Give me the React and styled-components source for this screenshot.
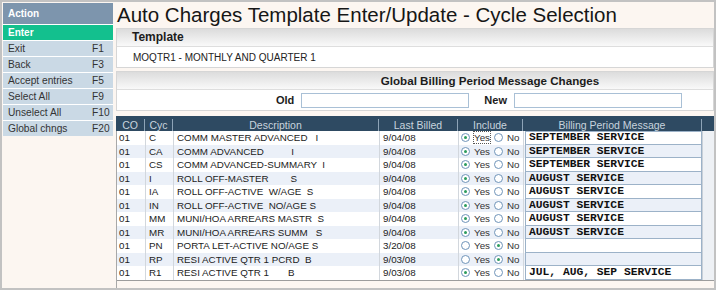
import styled, { createGlobalStyle } from "styled-components";

const GlobalStyle = createGlobalStyle`
  html, body { margin: 0; padding: 0; background: #fff; }
  body { font-family: "Liberation Sans", Arial, sans-serif; color: #222; }
`;

const Frame = styled.div`
  box-sizing: border-box;
  width: 716px;
  height: 290px;
  border: 2px solid #c2c2c2;
  background: #fcf6f1;
  display: flex;
  gap: 3px;
  padding: 1px 0 0 1px;
`;

const Sidebar = styled.div`
  width: 110px;
  display: flex;
  flex-direction: column;
`;

const SideHead = styled.div`
  height: 21px;
  line-height: 21px;
  background: #7d95ad;
  color: #fff;
  font-weight: bold;
  font-size: 10px;
  padding-left: 5px;
`;

const SideRow = styled.div`
  height: 15px;
  border-top: 1px solid #fff;
  display: grid;
  grid-template-columns: 1fr 21px;
  align-items: center;
  padding-left: 5px;
  font-size: ${(p) => (p.$active ? "10px" : "10.2px")};
  font-weight: ${(p) => (p.$active ? "bold" : "normal")};
  background: ${(p) => (p.$active ? "#13c08e" : "#cad9e5")};
  color: ${(p) => (p.$active ? "#fff" : "#333")};
`;

const Main = styled.div`
  flex: 1;
  display: flex;
  flex-direction: column;
`;

const Title = styled.div`
  height: 24px;
  margin-bottom: 1px;
  line-height: 24px;
  font-size: 20.5px;
  color: #161616;
  padding-left: 1px;
  white-space: nowrap;
`;

const Panel = styled.div`
  border: 1px solid #d6d6d6;
  background: #fff;
  margin-top: ${(p) => p.$gap || 0}px;
`;

const PanelHead = styled.div`
  height: 17px;
  line-height: 17px;
  background: linear-gradient(to bottom, #dcdcdc, #f9f9f9);
  border-bottom: 1px solid #dedede;
  font-weight: bold;
  color: #1c1c1c;
  font-size: ${(p) => p.$size}px;
  padding-left: ${(p) => p.$indent}px;
  text-align: ${(p) => p.$align || "left"};
`;

const PanelBody = styled.div`
  height: 20px;
  display: flex;
  align-items: center;
  font-size: 10px;
  padding-left: ${(p) => p.$indent}px;
  gap: ${(p) => p.$gapX || 0}px;
`;

const FieldLabel = styled.span`
  font-weight: bold;
  font-size: 11px;
  color: #1c1c1c;
  margin-left: ${(p) => p.$ml || 0}px;
`;

const TextBox = styled.div`
  box-sizing: border-box;
  width: 168px;
  height: 15px;
  border: 1px solid #a9c0d6;
  background: #fff;
`;

const Table = styled.div`
  flex: 1;
  margin-top: 5px;
  display: flex;
  flex-direction: column;
  border-left: 1px solid #a8a8a8;
`;

const cols = "28px 28px 206px 79px 65px 179px 1fr";

const HeadRow = styled.div`
  height: 15px;
  display: grid;
  grid-template-columns: ${cols};
  background: #2e4a62;
  margin-left: -1px;
`;

const HeadCell = styled.div`
  margin: 3px 0;
  border-left: ${(p) => (p.$first ? "none" : "1px solid #8ea4b7")};
  display: flex;
  align-items: center;
  justify-content: center;
  font-size: 10.5px;
  color: #c8d4de;
  white-space: nowrap;
`;

const Row = styled.div`
  height: 13.5px;
  display: grid;
  grid-template-columns: ${cols};
  background: ${(p) => (p.$alt ? "#ebf0f8" : "#fff")};
`;

const Cell = styled.div`
  border-left: ${(p) => (p.$first ? "none" : "1px solid #d2d7dd")};
  padding-left: ${(p) => (p.$first ? 2 : 3)}px;
  font-size: 9.8px;
  line-height: 13.5px;
  white-space: pre;
  overflow: hidden;
  color: #222;
`;

const IncludeCell = styled.div`
  border-left: 1px solid #d2d7dd;
  display: flex;
  align-items: center;
  padding-left: 2px;
  font-size: 9.8px;
  color: #333;
`;

const Radio = styled.span`
  box-sizing: border-box;
  width: 9px;
  height: 9px;
  border-radius: 50%;
  border: 1px solid #6f94b9;
  background: #fff;
  display: inline-flex;
  align-items: center;
  justify-content: center;
  margin-right: 4px;
  margin-left: ${(p) => p.$ml || 0}px;
  &::after {
    content: "";
    width: 3px;
    height: 3px;
    border-radius: 50%;
    background: ${(p) => (p.$on ? "#2c9c5c" : "transparent")};
  }
`;

const RadioLabel = styled.span`
  line-height: 11px;
  outline: ${(p) => (p.$focus ? "1px dotted #555" : "none")};
`;

const MsgCell = styled.div`
  border-left: 1px solid #d2d7dd;
  padding-left: 1px;
  display: flex;
`;

const MsgBox = styled.div`
  box-sizing: border-box;
  flex: 1;
  border: 1px solid #9cb2c8;
  border-top: ${(p) => (p.$first ? "1px solid #9cb2c8" : "none")};
  padding-left: 3px;
  font-family: "Liberation Mono", "Courier New", monospace;
  font-weight: bold;
  font-size: 11.3px;
  line-height: ${(p) => (p.$first ? "11.5px" : "12.5px")};
  color: #111;
  white-space: pre;
`;

const EndCell = styled.div`
  border-left: 1px solid #c9d0d8;
  background: #eef1f5;
`;

const Filler = styled.div`
  flex: 1;
  border-top: 1px solid #9c9c9c;
`;

const actions = [
  ["Exit", "F1"],
  ["Back", "F3"],
  ["Accept entries", "F5"],
  ["Select All", "F9"],
  ["Unselect All", "F10"],
  ["Global chngs", "F20"],
];

const rows = [
  ["C", "COMM MASTER ADVANCED   I", "9/04/08", true, "SEPTEMBER SERVICE"],
  ["CA", "COMM ADVANCED          I", "9/04/08", true, "SEPTEMBER SERVICE"],
  ["CS", "COMM ADVANCED-SUMMARY  I", "9/04/08", true, "SEPTEMBER SERVICE"],
  ["I", "ROLL OFF-MASTER        S", "9/04/08", true, "AUGUST SERVICE"],
  ["IA", "ROLL OFF-ACTIVE  W/AGE  S", "9/04/08", true, "AUGUST SERVICE"],
  ["IN", "ROLL OFF-ACTIVE  NO/AGE S", "9/04/08", true, "AUGUST SERVICE"],
  ["MM", "MUNI/HOA ARREARS MASTR  S", "9/04/08", true, "AUGUST SERVICE"],
  ["MR", "MUNI/HOA ARREARS SUMM   S", "9/04/08", true, "AUGUST SERVICE"],
  ["PN", "PORTA LET-ACTIVE NO/AGE S", "3/20/08", false, ""],
  ["RP", "RESI ACTIVE QTR 1 PCRD  B", "9/03/08", false, ""],
  ["R1", "RESI ACTIVE QTR 1       B", "9/03/08", true, "JUL, AUG, SEP SERVICE"],
];

export default function App() {
  return (
    <>
      <GlobalStyle />
      <Frame>
        <Sidebar>
          <SideHead>Action</SideHead>
          <SideRow $active>Enter</SideRow>
          {actions.map(([label, key]) => (
            <SideRow key={key}>
              <span>{label}</span>
              <span>{key}</span>
            </SideRow>
          ))}
        </Sidebar>

        <Main>
          <Title>Auto Charges Template Enter/Update - Cycle Selection</Title>

          <Panel>
            <PanelHead $size={12} $indent={15}>Template</PanelHead>
            <PanelBody $indent={16}>MOQTR1 - MONTHLY AND QUARTER 1</PanelBody>
          </Panel>

          <Panel $gap={3}>
            <PanelHead $size={11.6} $indent={150} $align="center">
              Global Billing Period Message Changes
            </PanelHead>
            <PanelBody $indent={159} $gapX={7}>
              <FieldLabel>Old</FieldLabel>
              <TextBox />
              <FieldLabel $ml={8}>New</FieldLabel>
              <TextBox />
            </PanelBody>
          </Panel>

          <Table>
            <HeadRow>
              <HeadCell $first>CO</HeadCell>
              <HeadCell>Cyc</HeadCell>
              <HeadCell>Description</HeadCell>
              <HeadCell>Last Billed</HeadCell>
              <HeadCell>Include</HeadCell>
              <HeadCell>Billing Period Message</HeadCell>
              <HeadCell />
            </HeadRow>
            {rows.map(([cyc, desc, date, yes, msg], i) => (
              <Row key={cyc} $alt={i % 2 === 1}>
                <Cell $first>01</Cell>
                <Cell>{cyc}</Cell>
                <Cell>{desc}</Cell>
                <Cell>{date}</Cell>
                <IncludeCell>
                  <Radio $on={yes} />
                  <RadioLabel $focus={i === 0}>Yes</RadioLabel>
                  <Radio $on={!yes} $ml={4} />
                  <RadioLabel>No</RadioLabel>
                </IncludeCell>
                <MsgCell>
                  <MsgBox $first={i === 0}>{msg}</MsgBox>
                </MsgCell>
                <EndCell />
              </Row>
            ))}
            <Filler />
          </Table>
        </Main>
      </Frame>
    </>
  );
}
